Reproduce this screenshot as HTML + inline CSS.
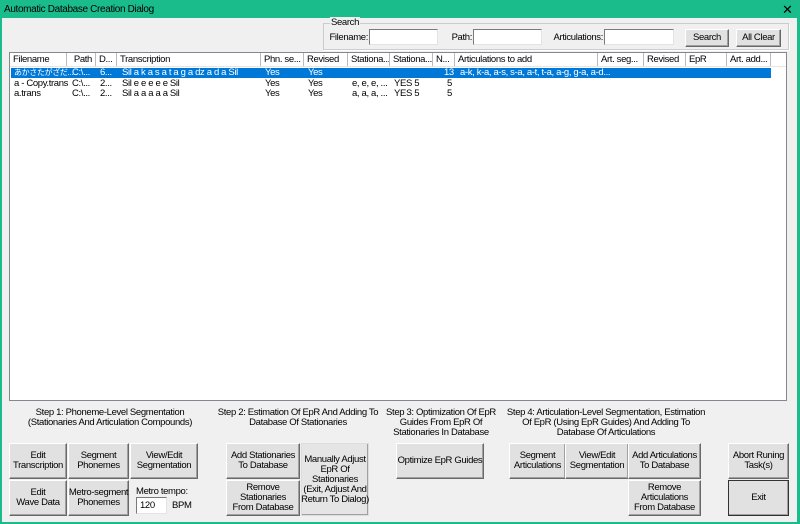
<!DOCTYPE html><html><head><style>
body{margin:0;width:800px;height:524px;background:#1abc8c;font-family:"Liberation Sans","Noto Sans CJK JP",sans-serif;font-size:9.5px;letter-spacing:-0.35px;color:#000;overflow:hidden;position:relative}
.a{position:absolute;white-space:nowrap}
#c{left:2px;top:18px;width:795px;height:504px;background:#f0f0f0}
.btn{position:absolute;white-space:nowrap;background:#e1e1e1;border:1px solid;border-color:#fff #696969 #696969 #fff;box-shadow:inset -1px -1px 0 #a0a0a0;display:flex;align-items:center;justify-content:center;text-align:center;line-height:10px;box-sizing:border-box}
.in{position:absolute;background:#fff;border:1px solid;border-color:#7a7a7a #e3e3e3 #e3e3e3 #7a7a7a;box-sizing:border-box}
.h{position:absolute;top:53px;height:13px;border-right:1px solid #bbb;padding-left:3px;box-sizing:border-box;line-height:13px;white-space:nowrap;overflow:hidden;background:#fff}
.r{position:absolute;white-space:nowrap;line-height:10px}
.lbl{position:absolute;text-align:center;line-height:10px;white-space:nowrap}
.sl{position:absolute;top:32px;width:60px;text-align:right;white-space:nowrap}
</style></head><body>
<div class="a" style="left:4px;top:4px;font-size:10px">Automatic Database Creation Dialog</div>
<div class="a" style="left:782px;top:2px;font-size:13px">✕</div>
<div class="a" id="c"></div>
<div class="a" style="left:323px;top:23px;width:464px;height:25px;border:1px solid #ccc;box-shadow:1px 1px 0 #fff"></div>
<div class="a" style="left:330px;top:17px;background:#f0f0f0;padding:0 1px">Search</div>
<div class="sl" style="left:308px">Filename:</div><div class="in" style="left:369px;top:29px;width:69px;height:16px"></div>
<div class="sl" style="left:412px">Path:</div><div class="in" style="left:473px;top:29px;width:69px;height:16px"></div>
<div class="sl" style="left:543px">Articulations:</div><div class="in" style="left:604px;top:29px;width:70px;height:16px"></div>
<div class="btn" style="left:685px;top:29px;width:44px;height:18px">Search</div>
<div class="btn" style="left:736px;top:29px;width:45px;height:18px">All Clear</div>
<div class="a" style="left:9px;top:52px;width:778px;height:349px;background:#fff;border:1px solid #828790;box-sizing:border-box"></div>
<div class="h" style="left:10px;width:57px">Filename</div>
<div class="h" style="left:67px;width:29px;text-align:right;padding-right:3px">Path</div>
<div class="h" style="left:96px;width:21px">D...</div>
<div class="h" style="left:117px;width:144px">Transcription</div>
<div class="h" style="left:261px;width:43px">Phn. se...</div>
<div class="h" style="left:304px;width:44px">Revised</div>
<div class="h" style="left:348px;width:42px">Stationa...</div>
<div class="h" style="left:390px;width:43px">Stationa...</div>
<div class="h" style="left:433px;width:22px">N...</div>
<div class="h" style="left:455px;width:143px">Articulations to add</div>
<div class="h" style="left:598px;width:46px">Art. seg...</div>
<div class="h" style="left:644px;width:42px">Revised</div>
<div class="h" style="left:686px;width:41px">EpR</div>
<div class="h" style="left:727px;width:44px">Art. add...</div>
<div class="a" style="left:10px;top:66px;width:776px;height:1px;background:#e5e5e5"></div>
<div class="a" style="left:11px;top:68px;width:760px;height:10px;background:#0078d7"></div>
<div class="r" style="left:14px;top:68px;color:#fff;font-size:8px">あかさたがざだ...</div><div class="r" style="left:72px;top:68px;color:#fff">C:\...</div><div class="r" style="left:100px;top:68px;color:#fff">6...</div><div class="r" style="left:122px;top:68px;color:#fff">Sil a k a s a t a g a dz a d a Sil</div><div class="r" style="left:265px;top:68px;color:#fff">Yes</div><div class="r" style="left:308px;top:68px;color:#fff">Yes</div><div class="r" style="left:444px;top:68px;color:#fff">13</div><div class="r" style="left:460px;top:68px;color:#fff">a-k, k-a, a-s, s-a, a-t, t-a, a-g, g-a, a-d...</div>
<div class="r" style="left:14px;top:79px">a - Copy.trans</div><div class="r" style="left:72px;top:79px">C:\...</div><div class="r" style="left:100px;top:79px">2...</div><div class="r" style="left:122px;top:79px">Sil e e e e e Sil</div><div class="r" style="left:265px;top:79px">Yes</div><div class="r" style="left:308px;top:79px">Yes</div><div class="r" style="left:352px;top:79px">e, e, e, ...</div><div class="r" style="left:394px;top:79px">YES 5</div><div class="r" style="left:447px;top:79px">5</div>
<div class="r" style="left:14px;top:89px">a.trans</div><div class="r" style="left:72px;top:89px">C:\...</div><div class="r" style="left:100px;top:89px">2...</div><div class="r" style="left:122px;top:89px">Sil a a a a a Sil</div><div class="r" style="left:265px;top:89px">Yes</div><div class="r" style="left:308px;top:89px">Yes</div><div class="r" style="left:352px;top:89px">a, a, a, ...</div><div class="r" style="left:394px;top:89px">YES 5</div><div class="r" style="left:447px;top:89px">5</div>
<div class="lbl" style="left:10px;top:408px;width:200px">Step 1: Phoneme-Level Segmentation<br>(Stationaries And Articulation Compounds)</div>
<div class="lbl" style="left:198px;top:408px;width:200px">Step 2: Estimation Of EpR And Adding To<br>Database Of Stationaries</div>
<div class="lbl" style="left:381px;top:408px;width:120px">Step 3: Optimization Of EpR<br>Guides From EpR Of<br>Stationaries In Database</div>
<div class="lbl" style="left:496px;top:408px;width:220px">Step 4: Articulation-Level Segmentation, Estimation<br>Of EpR (Using EpR Guides) And Adding To<br>Database Of Articulations</div>
<div class="btn" style="left:9px;top:443px;width:58px;height:36px">Edit<br>Transcription</div>
<div class="btn" style="left:68px;top:443px;width:61px;height:36px">Segment<br>Phonemes</div>
<div class="btn" style="left:130px;top:443px;width:68px;height:36px">View/Edit<br>Segmentation</div>
<div class="btn" style="left:9px;top:480px;width:58px;height:36px">Edit<br>Wave Data</div>
<div class="btn" style="left:68px;top:480px;width:61px;height:36px">Metro-segment<br>Phonemes</div>
<div class="a" style="left:136px;top:486px">Metro tempo:</div>
<div class="in" style="left:136px;top:497px;width:31px;height:17px;padding:2px 3px">120</div>
<div class="a" style="left:172px;top:500px">BPM</div>
<div class="btn" style="left:226px;top:443px;width:74px;height:36px">Add Stationaries<br>To Database</div>
<div class="btn" style="left:226px;top:480px;width:74px;height:36px">Remove<br>Stationaries<br>From Database</div>
<div class="btn" style="left:301px;top:443px;width:68px;height:73px;background:#e5e5e5;border-color:#ddd">Manually Adjust<br>EpR Of<br>Stationaries<br>(Exit, Adjust And<br>Return To Dialog)</div>
<div class="btn" style="left:396px;top:443px;width:88px;height:36px">Optimize EpR Guides</div>
<div class="btn" style="left:509px;top:443px;width:57px;height:36px">Segment<br>Articulations</div>
<div class="btn" style="left:565px;top:443px;width:64px;height:36px">View/Edit<br>Segmentation</div>
<div class="btn" style="left:628px;top:443px;width:73px;height:36px">Add Articulations<br>To Database</div>
<div class="btn" style="left:628px;top:480px;width:73px;height:36px">Remove<br>Articulations<br>From Database</div>
<div class="btn" style="left:728px;top:443px;width:61px;height:36px">Abort Runing<br>Task(s)</div>
<div class="btn" style="left:728px;top:480px;width:61px;height:36px;border:1px solid #333">Exit</div>
</body></html>
